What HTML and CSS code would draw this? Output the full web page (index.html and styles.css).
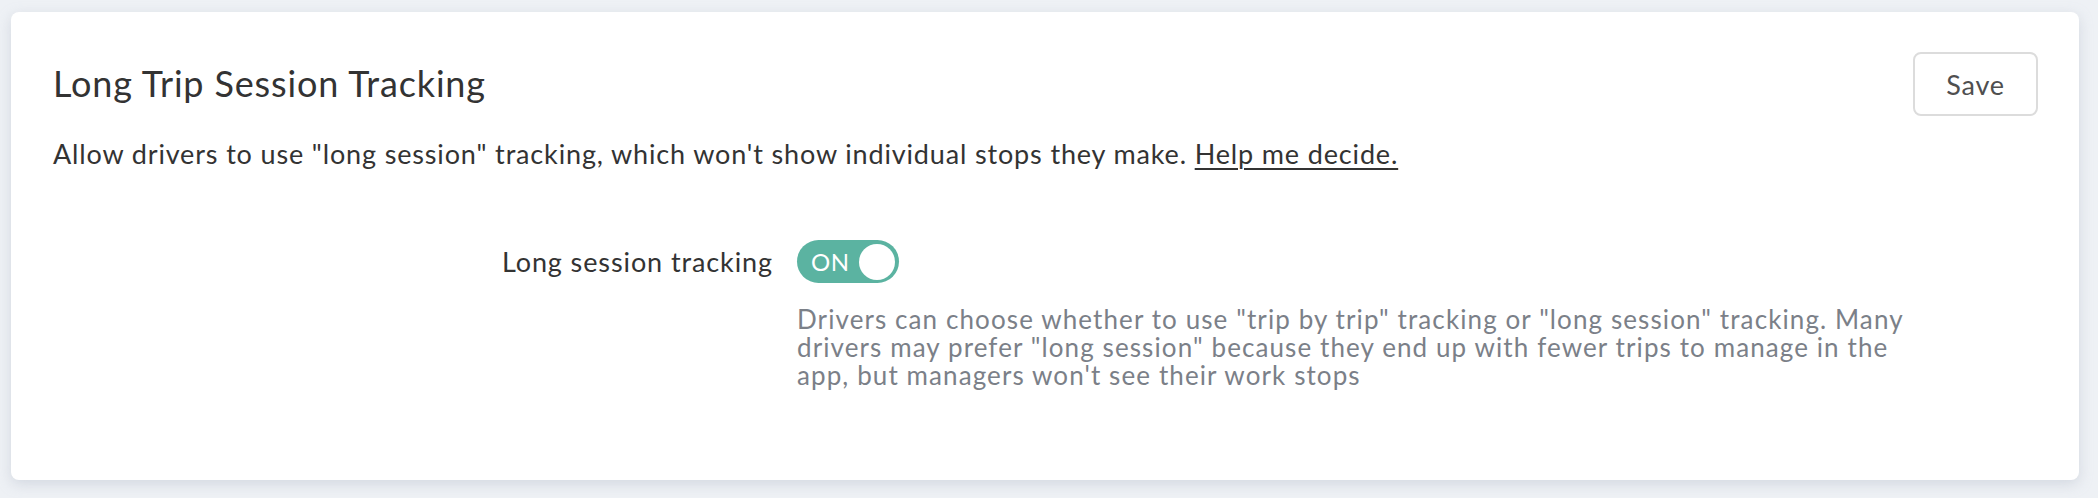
FILE: index.html
```html
<!DOCTYPE html>
<html lang="en">
<head>
<meta charset="utf-8">
<title>Long Trip Session Tracking</title>
<link rel="stylesheet" href="styles.css">
</head>
<body>
<section class="card">
  <header class="card-header">
    <h2 class="card-title">Long Trip Session Tracking</h2>
    <button class="btn-save" type="button">Save</button>
  </header>
  <p class="card-desc">Allow drivers to use "long session" tracking, which won't show individual stops they make. <a class="help-link" href="#">Help me decide.</a></p>
  <div class="setting-row">
    <label class="setting-label">Long session tracking</label>
    <div class="setting-control">
      <span class="toggle"><span class="toggle-text">ON</span><span class="toggle-knob"></span></span>
    </div>
    <div class="setting-help">Drivers can choose whether to use "trip by trip" tracking or "long session" tracking. Many drivers may prefer "long session" because they end up with fewer trips to manage in the app, but managers won't see their work stops</div>
  </div>
</section>
</body>
</html>
```
FILE: styles.css
```css
html, body {
  margin: 0;
  padding: 0;
}
body {
  background: #eef1f5;
  font-family: Lato, "Open Sans", sans-serif;
  color: #333;
  padding: 12px 19px 18px 11px;
}
.card {
  background: #fff;
  border-radius: 8px;
  box-shadow: 0 4px 14px rgba(160, 170, 185, 0.35);
  padding: 40px 41px 86px 42px;
  height: 468px;
  box-sizing: border-box;
}
.card-header {
  display: flex;
  justify-content: space-between;
  align-items: center;
  height: 64px;
}
.card-title {
  margin: 0 0 2px;
  font-size: 36px;
  font-weight: 400;
  color: #333;
  letter-spacing: 0.85px;
}
.btn-save {
  width: 125px;
  height: 64px;
  border: 2px solid #dcdcdc;
  border-radius: 8px;
  background: #fff;
  font-family: Lato, sans-serif;
  font-size: 27px;
  font-weight: 400;
  letter-spacing: 0.8px;
  color: #4f4f4f;
  cursor: pointer;
}
.card-desc {
  margin: 20px 0 0;
  font-size: 27px;
  line-height: 36px;
  letter-spacing: 0.85px;
  color: #333;
}
.help-link {
  color: #333;
  text-decoration: underline;
  text-decoration-thickness: 2px;
  text-underline-offset: 4px;
}
.setting-row {
  display: grid;
  grid-template-columns: 720px 1fr;
  column-gap: 24px;
  row-gap: 22px;
  margin-top: 68px;
}
.setting-label {
  text-align: right;
  font-size: 27px;
  line-height: 43px;
  letter-spacing: 0.9px;
  color: #333;
}
.setting-control {
  display: flex;
  align-items: center;
}
.toggle {
  display: inline-flex;
  align-items: center;
  justify-content: space-between;
  width: 102px;
  height: 43px;
  border-radius: 22px;
  background: #5bb3a1;
  box-sizing: border-box;
  padding: 0 4px 0 14px;
}
.toggle-text {
  color: #fff;
  font-size: 24px;
  letter-spacing: 0.5px;
}
.toggle-knob {
  width: 36px;
  height: 36px;
  border-radius: 50%;
  background: #fff;
}
.setting-help {
  grid-column: 2;
  max-width: 1135px;
  font-size: 26px;
  line-height: 28px;
  letter-spacing: 1.1px;
  color: #7b8088;
}
```
